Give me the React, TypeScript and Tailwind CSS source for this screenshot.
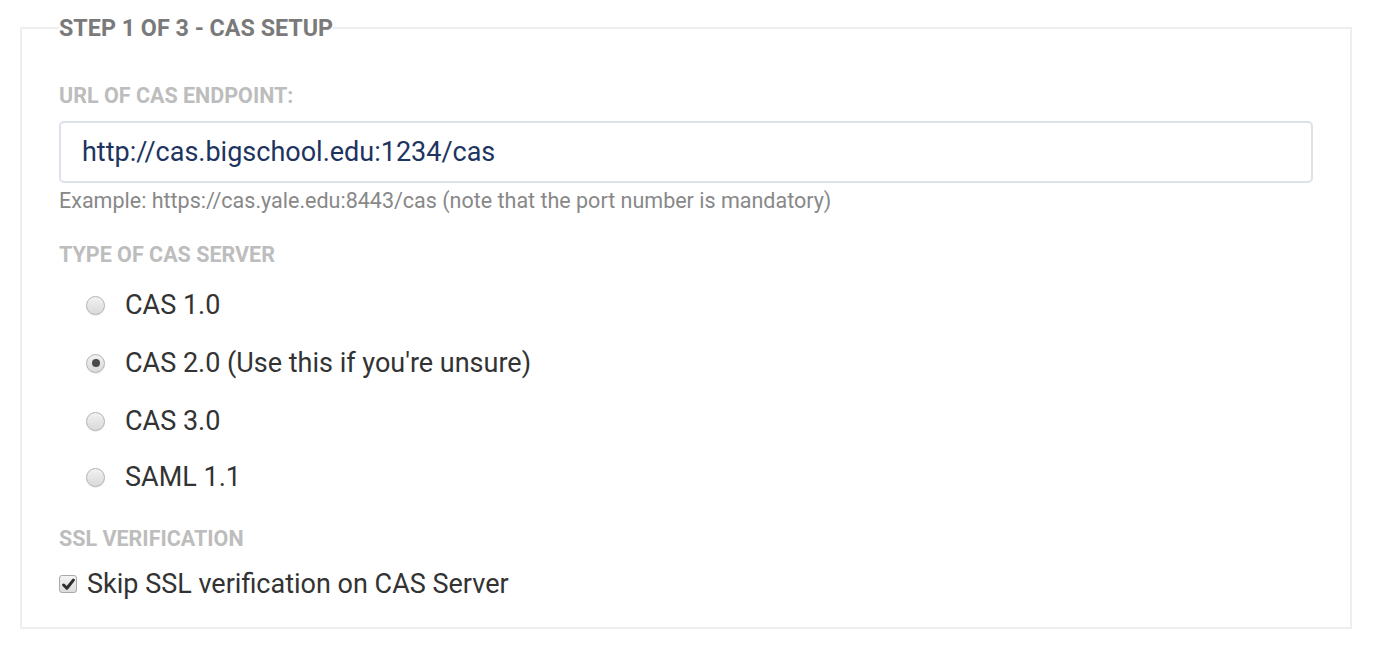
import { useState } from 'react';

const options = [
  { id: 'cas1', label: 'CAS 1.0' },
  { id: 'cas2', label: "CAS 2.0 (Use this if you're unsure)" },
  { id: 'cas3', label: 'CAS 3.0' },
  { id: 'saml', label: 'SAML 1.1' },
];

function Radio({ checked }: { checked: boolean }) {
  return (
    <span className="flex h-[19px] w-[19px] shrink-0 items-center justify-center rounded-full border border-[#b3b3b3] bg-gradient-to-b from-[#f2f2f2] to-[#d9d9d9] shadow-[0_1px_1px_rgba(0,0,0,0.08)]">
      {checked && <span className="h-[8px] w-[8px] rounded-full bg-[#4a4a4a]" />}
    </span>
  );
}

function Checkbox({ checked }: { checked: boolean }) {
  return (
    <span className="flex h-[18px] w-[18px] shrink-0 items-center justify-center rounded-[3px] border border-[#a9a9a9] bg-gradient-to-b from-[#f4f4f4] to-[#dcdcdc]">
      {checked && (
        <svg className="h-[13px] w-[13px]" viewBox="0 0 12 12" fill="none">
          <path d="M1.5 6.5L4.5 9.5L10.5 2" stroke="#2f2f2f" strokeWidth={2.8} strokeLinecap="round" strokeLinejoin="round" />
        </svg>
      )}
    </span>
  );
}

export default function App() {
  const [url, setUrl] = useState('http://cas.bigschool.edu:1234/cas');
  const [server, setServer] = useState('cas2');
  const [skipSsl, setSkipSsl] = useState(true);

  return (
    <div className="min-h-[654px] bg-white pl-[20px] pr-[30px] pt-[14px] font-['Roboto',sans-serif]">
      <fieldset className="m-0 border-2 border-[#eeeeee] px-[37px] pb-[28px] pt-0">
        <legend className="p-0 text-[23.3px] font-bold leading-[28px] text-[#7a7a7a]">STEP 1 OF 3 - CAS SETUP</legend>

        <div className="mt-[42px] text-[21.5px] font-bold leading-[24px] text-[#bdbdbd]">URL OF CAS ENDPOINT:</div>
        <input
          value={url}
          onChange={(e) => setUrl(e.target.value)}
          className="mt-[13px] block h-[62px] w-full rounded-[5px] border-2 border-[#dde1ea] pl-[21px] text-[27px] text-[#1d3461] outline-none"
        />
        <div className="mt-[6px] text-[21.5px] leading-[24px] text-[#888888]">
          Example: https://cas.yale.edu:8443/cas (note that the port number is mandatory)
        </div>

        <div className="mt-[30px] text-[21.5px] font-bold leading-[24px] text-[#bdbdbd]">TYPE OF CAS SERVER</div>
        <div className="mt-[9px]">
          {options.map((o, i) => (
            <label
              key={o.id}
              onClick={() => setServer(o.id)}
              className={`flex h-[58px] cursor-pointer items-center gap-[20px] pl-[27px] text-[27px] text-[#333333] ${i === 3 ? '-mt-[2px]' : ''}`}
            >
              <Radio checked={server === o.id} />
              <span>{o.label}</span>
            </label>
          ))}
        </div>

        <div className="mt-[21px] text-[21.5px] font-bold leading-[24px] text-[#bdbdbd]">SSL VERIFICATION</div>
        <label
          onClick={() => setSkipSsl(!skipSsl)}
          className="mt-[18px] flex h-[30px] cursor-pointer items-center gap-[10px] text-[27px] text-[#333333]"
        >
          <Checkbox checked={skipSsl} />
          <span>Skip SSL verification on CAS Server</span>
        </label>
      </fieldset>
    </div>
  );
}
